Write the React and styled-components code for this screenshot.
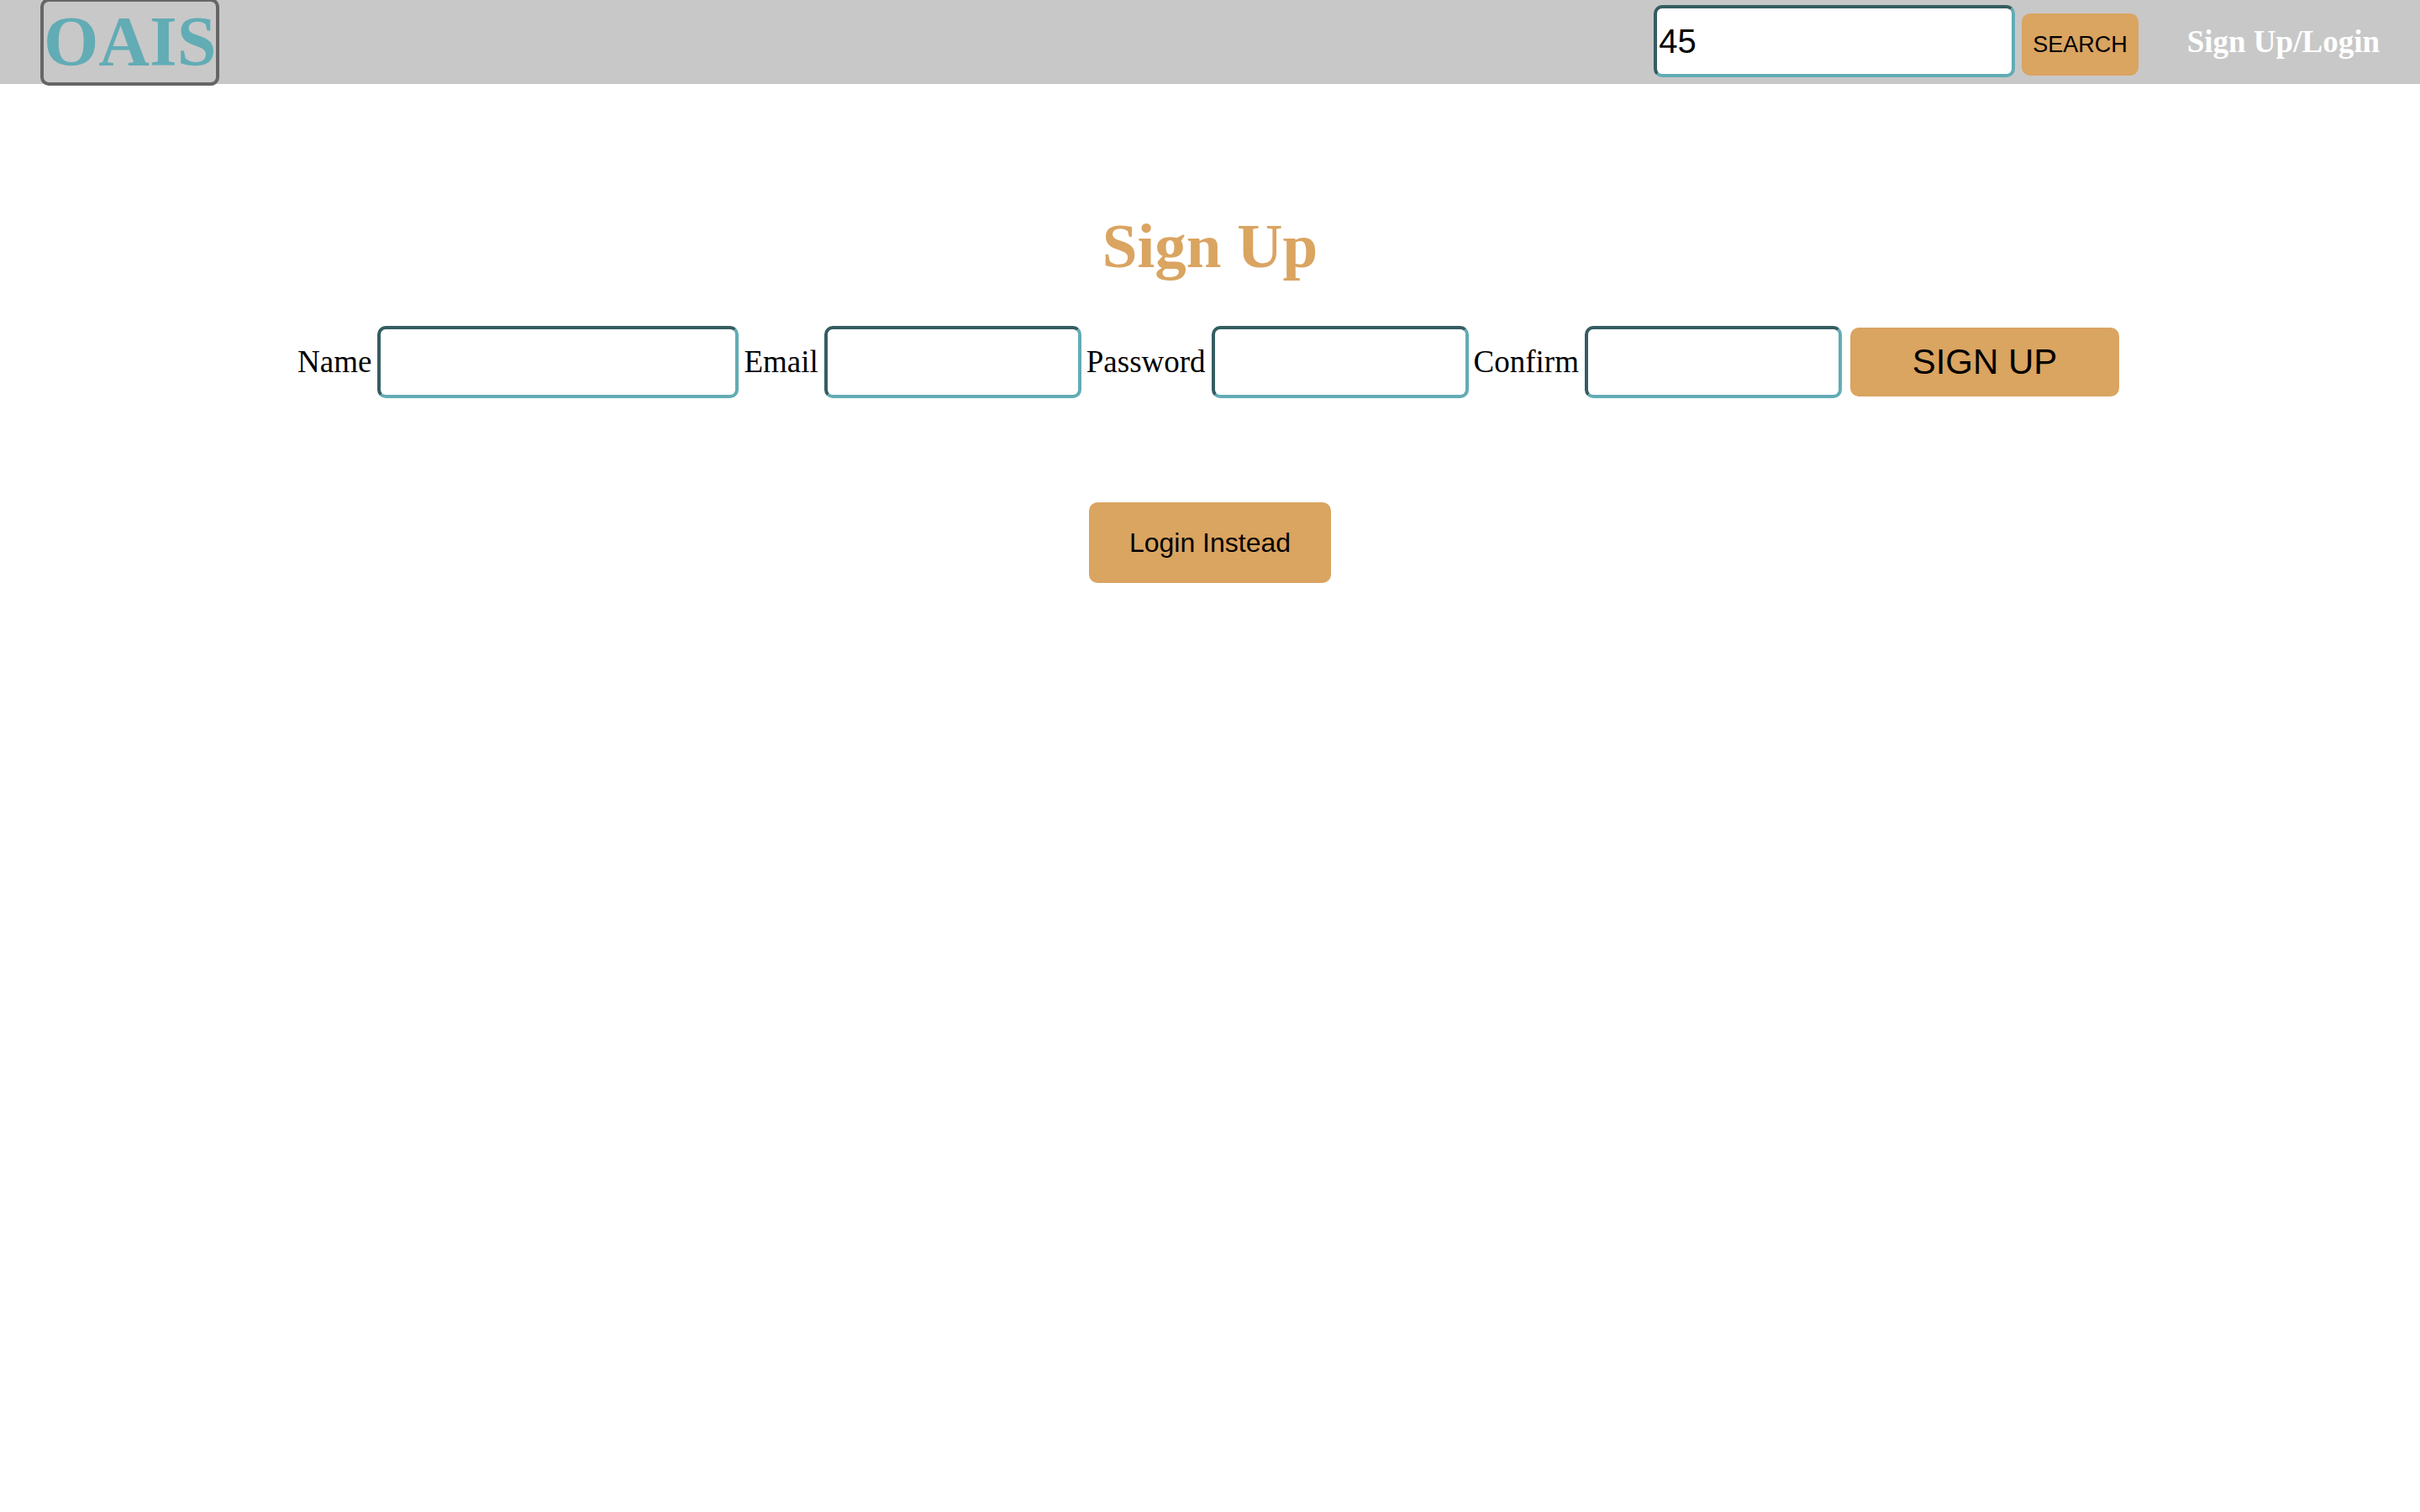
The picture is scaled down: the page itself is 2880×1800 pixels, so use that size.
import React, { useState } from "react";
import styled, { createGlobalStyle } from "styled-components";

const serif = '"Liberation Serif", "Times New Roman", serif';
const sans = '"Liberation Sans", Arial, sans-serif';
const teal = "#62acb5";
const tealDark = "#355d61";
const sand = "#daa461";

const GlobalStyle = createGlobalStyle`
  *, *::before, *::after {
    box-sizing: border-box;
  }
  body {
    margin: 0;
    background: #fff;
    color: #000;
    font-family: ${serif};
    font-size: 37px;
  }
`;

const Header = styled.header`
  display: flex;
  align-items: center;
  justify-content: space-between;
  height: 100px;
  padding: 0 48px;
  background: #c8c8c8;
`;

const Logo = styled.a`
  border: 4px solid #666;
  border-radius: 10px;
  color: ${teal};
  font-size: 84px;
  font-weight: bold;
  line-height: 96px;
  text-decoration: none;
`;

const Nav = styled.nav`
  display: flex;
  align-items: center;
  gap: 58px;
  padding-bottom: 2px;
`;

const SearchForm = styled.form`
  display: flex;
  align-items: flex-end;
  gap: 8px;
`;

const TextInput = styled.input`
  width: ${({ $wide }) => ($wide ? 430 : 306)}px;
  height: 86px;
  padding: 2px;
  border: 4px solid;
  border-color: ${tealDark} ${teal} ${teal} ${tealDark};
  border-radius: 10px;
  background: #fff;
  color: #000;
  font-family: ${sans};
  font-size: 40px;
  outline: none;
`;

const Button = styled.button`
  padding: 0;
  border: 0;
  border-radius: 10px;
  background: ${sand};
  color: #000;
  font-family: ${sans};
  cursor: pointer;
`;

const SearchButton = styled(Button)`
  height: 74px;
  padding: 0 13px;
  margin-bottom: 2px;
  font-size: 27px;
`;

const NavLink = styled.a`
  color: #fff;
  font-weight: bold;
  text-decoration: none;
`;

const Main = styled.main`
  display: flex;
  flex-direction: column;
  align-items: center;
  padding-top: 150px;
`;

const Title = styled.h1`
  margin: 0 0 52px;
  color: ${sand};
  font-size: 75px;
  line-height: 86px;
`;

const SignUpForm = styled.form`
  display: flex;
  align-items: center;
  gap: 6px;
  margin-bottom: 124px;
`;

const Field = styled.div`
  display: flex;
  align-items: center;
  gap: 7px;
`;

const Label = styled.label`
  padding-bottom: 2px;
`;

const SubmitButton = styled(Button)`
  width: 320px;
  height: 82px;
  margin: 0 4px;
  font-size: 42px;
`;

const SwitchButton = styled(Button)`
  padding: 30px 48px;
  font-size: 32px;
  line-height: 36px;
`;

const fields = [
  { id: "name", label: "Name", type: "text", wide: true },
  { id: "email", label: "Email", type: "email" },
  { id: "password", label: "Password", type: "password" },
  { id: "confirm", label: "Confirm", type: "password" },
];

export default function App() {
  const [query, setQuery] = useState("45");
  const stay = (event) => event.preventDefault();

  return (
    <>
      <GlobalStyle />
      <Header>
        <Logo href="#home">OAIS</Logo>
        <Nav>
          <SearchForm onSubmit={stay}>
            <TextInput
              $wide
              type="text"
              aria-label="Search"
              value={query}
              onChange={(event) => setQuery(event.target.value)}
            />
            <SearchButton type="submit">SEARCH</SearchButton>
          </SearchForm>
          <NavLink href="#login">Sign Up/Login</NavLink>
        </Nav>
      </Header>
      <Main>
        <Title>Sign Up</Title>
        <SignUpForm onSubmit={stay}>
          {fields.map(({ id, label, type, wide }) => (
            <Field key={id}>
              <Label htmlFor={id}>{label}</Label>
              <TextInput id={id} name={id} type={type} $wide={wide} />
            </Field>
          ))}
          <SubmitButton type="submit">SIGN UP</SubmitButton>
        </SignUpForm>
        <SwitchButton type="button">Login Instead</SwitchButton>
      </Main>
    </>
  );
}
